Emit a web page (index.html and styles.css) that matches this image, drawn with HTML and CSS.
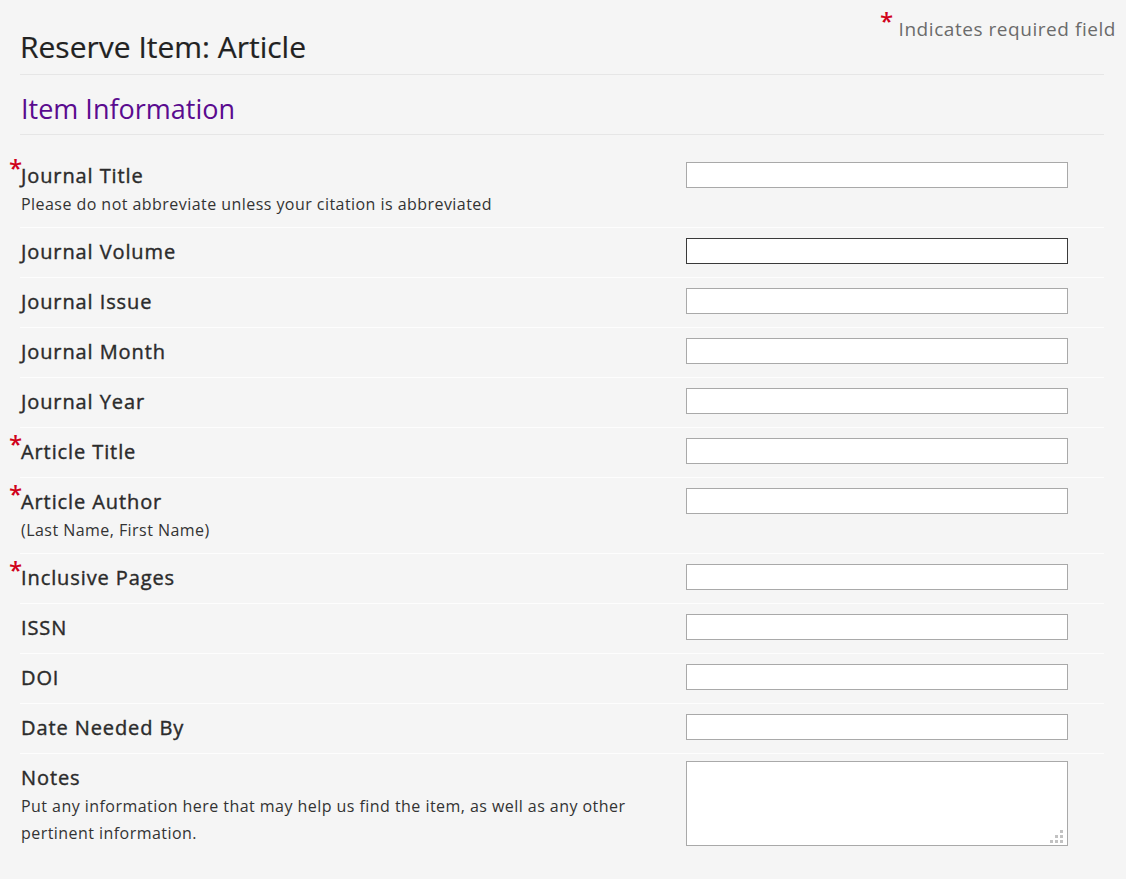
FILE: index.html
```html
<!DOCTYPE html>
<html lang="en">
<head>
<meta charset="utf-8">
<title>Reserve Item: Article</title>
<link rel="stylesheet" href="styles.css">
</head>
<body>
<div class="page">
  <header class="header">
    <p class="req-note"><span class="star">*</span> Indicates required field</p>
    <h1 class="title">Reserve Item: Article</h1>
  </header>
  <section class="section">
    <h2 class="section-title">Item Information</h2>
    <div class="rows">
      <div class="row row-hint">
        <div class="label-col">
          <label class="label"><span class="star req">*</span>Journal Title</label>
          <p class="hint">Please do not abbreviate unless your citation is abbreviated</p>
        </div>
        <input class="field" type="text">
      </div>
      <div class="row">
        <div class="label-col"><label class="label">Journal Volume</label></div>
        <input class="field field-focus" type="text">
      </div>
      <div class="row">
        <div class="label-col"><label class="label">Journal Issue</label></div>
        <input class="field" type="text">
      </div>
      <div class="row">
        <div class="label-col"><label class="label">Journal Month</label></div>
        <input class="field" type="text">
      </div>
      <div class="row">
        <div class="label-col"><label class="label">Journal Year</label></div>
        <input class="field" type="text">
      </div>
      <div class="row">
        <div class="label-col"><label class="label"><span class="star req">*</span>Article Title</label></div>
        <input class="field" type="text">
      </div>
      <div class="row row-hint">
        <div class="label-col">
          <label class="label"><span class="star req">*</span>Article Author</label>
          <p class="hint">(Last Name, First Name)</p>
        </div>
        <input class="field" type="text">
      </div>
      <div class="row">
        <div class="label-col"><label class="label"><span class="star req">*</span>Inclusive Pages</label></div>
        <input class="field" type="text">
      </div>
      <div class="row">
        <div class="label-col"><label class="label">ISSN</label></div>
        <input class="field" type="text">
      </div>
      <div class="row">
        <div class="label-col"><label class="label">DOI</label></div>
        <input class="field" type="text">
      </div>
      <div class="row">
        <div class="label-col"><label class="label">Date Needed By</label></div>
        <input class="field" type="text">
      </div>
      <div class="row row-last">
        <div class="label-col">
          <label class="label">Notes</label>
          <p class="hint hint-long">Put any information here that may help us find the item, as well as any other pertinent information.</p>
        </div>
        <div class="area-wrap">
          <textarea class="field area"></textarea>
          <svg class="grip" width="13" height="13" viewBox="0 0 13 13" aria-hidden="true">
            <rect x="10" y="0" width="3" height="3"/>
            <rect x="5" y="5" width="3" height="3"/>
            <rect x="10" y="5" width="3" height="3"/>
            <rect x="0" y="10" width="3" height="3"/>
            <rect x="5" y="10" width="3" height="3"/>
            <rect x="10" y="10" width="3" height="3"/>
          </svg>
        </div>
      </div>
    </div>
  </section>
</div>
</body>
</html>
```

FILE: styles.css
```css
html, body {
  margin: 0;
  padding: 0;
  background: #f5f5f5;
}
body {
  font-family: "Open Sans", "DejaVu Sans", sans-serif;
  color: #333;
}
.page {
  padding: 0 10px 30px 20px;
}
.header {
  overflow: hidden;
}
.req-note {
  float: right;
  margin: 14px 0 0 0;
  font-size: 19px;
  line-height: 26px;
  letter-spacing: 0.55px;
  color: #6b6b6b;
}
.star {
  color: #d0021b;
  font-size: 24px;
  font-weight: 600;
  position: relative;
  top: -6px;
  letter-spacing: 0;
  -webkit-text-stroke: 0;
}
.title {
  margin: 0 12px 0 0;
  padding: 30px 0 10px 0;
  font-size: 30px;
  font-weight: 400;
  line-height: 34px;
  color: #222;
  -webkit-text-stroke: 0.2px #222;
  border-bottom: 1px solid #e6e6e6;
}
.section {
  margin-right: 12px;
}
.section-title {
  margin: 0;
  padding: 19px 0 10px 1px;
  font-size: 27px;
  font-weight: 400;
  line-height: 30px;
  color: #5a0b8f;
  border-bottom: 1px solid #e6e6e6;
}
.rows {
  padding-top: 17px;
}
.row {
  display: grid;
  grid-template-columns: 666px 382px;
  align-items: start;
  padding: 10px 0 13px 0;
  border-bottom: 1px solid #fdfdfd;
}
.row-hint {
  padding-bottom: 10px;
}
.label-col {
  min-width: 0;
}
.label {
  display: block;
  font-size: 20px;
  line-height: 27px;
  font-weight: 400;
  letter-spacing: 0.9px;
  color: #2b2b2b;
  -webkit-text-stroke: 0.4px #2b2b2b;
  position: relative;
  padding-left: 1px;
  margin-bottom: -1px;
}
.star.req {
  position: absolute;
  left: -11px;
  top: -7px;
  font-size: 24px;
  line-height: 26px;
}
.hint {
  margin: 3px 0 0 1px;
  font-size: 16px;
  line-height: 26px;
  letter-spacing: 0.45px;
  color: #333;
  max-width: 630px;
}
.hint-long {
  line-height: 27px;
}
.field {
  display: block;
  box-sizing: border-box;
  width: 382px;
  height: 26px;
  margin: 0;
  background: #fff;
  border: 1px solid #a9a9a9;
  border-radius: 0;
  font-family: inherit;
  font-size: 16px;
}
.field-focus {
  border-color: #3a3a3a;
}
.area-wrap {
  position: relative;
  width: 382px;
  height: 85px;
  margin-top: -3px;
}
.area {
  height: 85px;
  resize: none;
}
.grip {
  position: absolute;
  right: 5px;
  bottom: 3px;
  fill: #c2c2c2;
}
.row-last {
  border-bottom: none;
}
```
